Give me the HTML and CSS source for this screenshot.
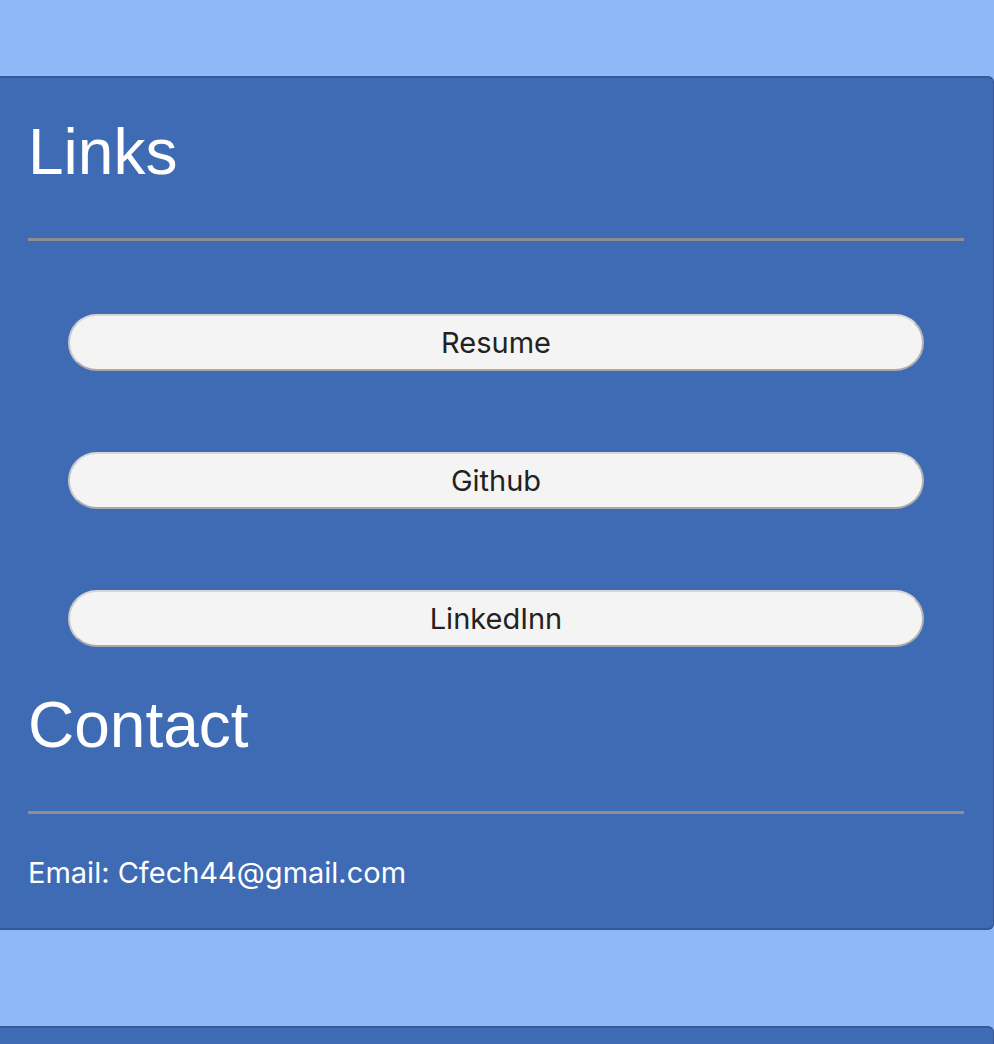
FILE: index.html
```html
<!DOCTYPE html>
<html lang="en">
<head>
<meta charset="utf-8">
<title>Links</title>
<link rel="stylesheet" href="styles.css">
</head>
<body>
  <main class="page">
    <section class="card">
      <h1 class="card-title">Links</h1>
      <hr class="rule">
      <div class="link-list">
        <button class="link-btn" type="button">Resume</button>
        <button class="link-btn" type="button">Github</button>
        <button class="link-btn" type="button">LinkedInn</button>
      </div>
      <h1 class="card-title card-title-contact">Contact</h1>
      <hr class="rule">
      <p class="email">Email: Cfech44@gmail.com</p>
    </section>
    <section class="card card-next"></section>
  </main>
</body>
</html>
```

FILE: styles.css
```css
html, body {
  margin: 0;
  padding: 0;
}

body {
  background: #8fb8f8;
  font-family: Inter, "Noto Sans", sans-serif;
}

.page {
  display: flex;
  flex-direction: column;
  gap: 96px;
  padding-top: 76px;
}

.card {
  width: 994px;
  box-sizing: border-box;
  background: #3e6bb4;
  border: 1px solid #34599a;
  border-left: none;
  border-top-width: 2px;
  border-bottom-width: 2px;
  border-radius: 0 6px 6px 0;
  padding: 37px 29px 38px 28px;
  color: #fff;
}

.card-title {
  margin: 0;
  font-family: "Liberation Sans", Arial, sans-serif;
  font-weight: 400;
  font-size: 64px;
  line-height: 74px;
}

.card-title-contact {
  margin-top: 41px;
}

.rule {
  margin: 49px 0 0 0;
  height: 3px;
  border: none;
  background: #8e8e8e;
}

.link-list {
  display: flex;
  flex-direction: column;
  gap: 81px;
  padding: 73px 40px 0 40px;
}

.link-btn {
  display: block;
  width: 100%;
  height: 57px;
  margin: 0;
  padding: 0;
  background: #f4f4f4;
  border: 2px solid;
  border-color: #d6d6d6 #b4b4b4 #a8a8a8 #c8c8c8;
  border-radius: 29px;
  font-family: Inter, "Noto Sans", sans-serif;
  font-size: 29px;
  color: #222;
  text-align: center;
}

.email {
  margin: 42px 0 0 0;
  font-size: 29px;
  line-height: 34px;
}

.card-next {
  height: 120px;
  padding: 0;
}
```
